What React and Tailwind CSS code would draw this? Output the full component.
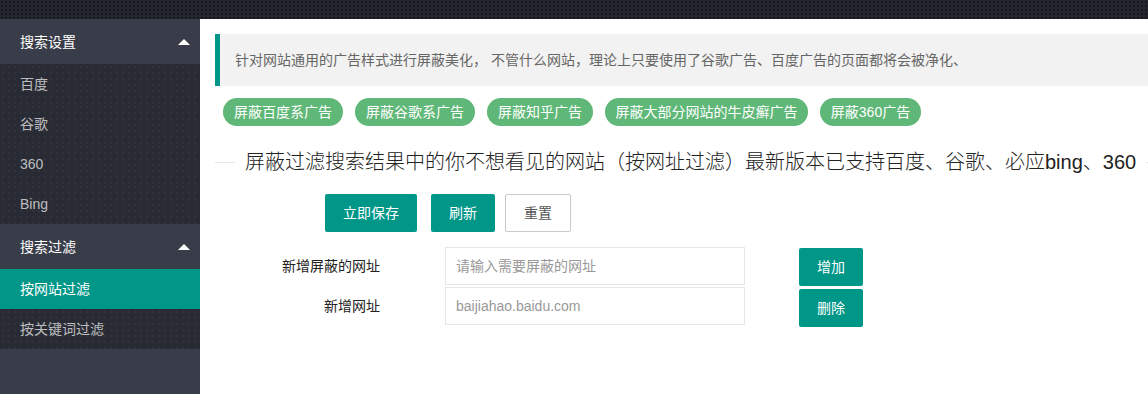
const font = { fontFamily: '"Liberation Sans", "Noto Sans CJK SC", sans-serif' };

const Arrow = () => (
  <span className="w-0 h-0 border-l-[6px] border-r-[6px] border-b-[6px] border-l-transparent border-r-transparent border-b-white" />
);

const NavHeader = ({ title }) => (
  <div className="h-[45px] pl-5 pr-[10px] flex items-center justify-between text-white text-sm bg-[#393d49]">
    <span>{title}</span>
    <Arrow />
  </div>
);

const NavItem = ({ label, active }) => (
  <div
    className={
      active
        ? 'h-10 px-5 flex items-center text-sm text-white bg-[#009688]'
        : 'h-10 px-5 flex items-center text-sm text-white/70 bg-[#282b33] bg-[radial-gradient(#30333c_1px,transparent_1px)] bg-[size:6px_6px]'
    }
  >
    {label}
  </div>
);

const pills = [
  { text: '屏蔽百度系广告', w: 'w-[120px]' },
  { text: '屏蔽谷歌系广告', w: 'w-[120px]' },
  { text: '屏蔽知乎广告', w: 'w-[106px]' },
  { text: '屏蔽大部分网站的牛皮癣广告', w: 'w-[203px]' },
  { text: '屏蔽360广告', w: 'w-[101px]' },
];

export default function App() {
  return (
    <div className="w-[1148px] h-[394px] overflow-hidden flex flex-col" style={font}>
      <div className="h-[19px] shrink-0 bg-[#23262e] bg-[radial-gradient(#15171c_1px,transparent_1px)] bg-[size:4px_4px]" />
      <div className="flex flex-1">
        {/* sidebar */}
        <div className="w-[200px] shrink-0 bg-[#393d49] flex flex-col">
          <NavHeader title="搜索设置" />
          <NavItem label="百度" />
          <NavItem label="谷歌" />
          <NavItem label="360" />
          <NavItem label="Bing" />
          <NavHeader title="搜索过滤" />
          <NavItem label="按网站过滤" active />
          <NavItem label="按关键词过滤" />
        </div>

        {/* main */}
        <div className="flex-1 bg-white p-[15px] pr-0">
          <div className="h-[52px] bg-[#f2f2f2] border-l-[5px] border-[#009688] pl-[15px] flex items-center text-sm leading-[22px] text-[#666]">
            针对网站通用的广告样式进行屏蔽美化， 不管什么网站，理论上只要使用了谷歌广告、百度广告的页面都将会被净化、
          </div>

          <div className="flex gap-3 mt-3 ml-2">
            {pills.map((p) => (
              <div
                key={p.text}
                className={`${p.w} h-7 rounded-full bg-[#5fb878] text-white text-sm flex items-center justify-center whitespace-nowrap`}
              >
                {p.text}
              </div>
            ))}
          </div>

          <div className="flex items-center mt-[21px]">
            <div className="w-5 h-px bg-[#e6e6e6]" />
            <div className="px-[10px] text-[20px] leading-[30px] font-light text-[#222] whitespace-nowrap">
              屏蔽过滤搜索结果中的你不想看见的网站（按网址过滤）最新版本已支持百度、谷歌、必应bing、360
            </div>
            <div className="flex-1 h-px bg-[#e6e6e6]" />
          </div>

          <div className="flex mt-[17px] ml-[110px]">
            <button className="h-[38px] px-[18px] rounded-[2px] bg-[#009688] text-white text-sm">立即保存</button>
            <button className="h-[38px] px-[18px] ml-[14px] rounded-[2px] bg-[#009688] text-white text-sm">刷新</button>
            <button className="h-[38px] px-[18px] ml-[10px] rounded-[2px] bg-white border border-[#c9c9c9] text-[#555] text-sm">重置</button>
          </div>

          <div className="flex items-start mt-[15px]">
            <div className="w-[165px] h-[38px] flex items-center justify-end text-sm text-[#222]">新增屏蔽的网址</div>
            <input
              className="ml-[65px] w-[300px] h-[38px] border border-[#e6e6e6] px-[10px] text-sm text-[#333] placeholder:text-[#999] outline-none"
              placeholder="请输入需要屏蔽的网址"
            />
            <button className="ml-[54px] mt-px w-16 h-[38px] rounded-[2px] bg-[#009688] text-white text-sm">增加</button>
          </div>
          <div className="flex items-start mt-px">
            <div className="w-[165px] h-[38px] flex items-center justify-end text-sm text-[#222]">新增网址</div>
            <input
              className="ml-[65px] w-[300px] h-[38px] border border-[#e6e6e6] px-[10px] text-sm text-[#333] placeholder:text-[#999] outline-none"
              placeholder="baijiahao.baidu.com"
            />
            <button className="ml-[54px] mt-[2px] w-16 h-[38px] rounded-[2px] bg-[#009688] text-white text-sm">删除</button>
          </div>
        </div>
      </div>
    </div>
  );
}
